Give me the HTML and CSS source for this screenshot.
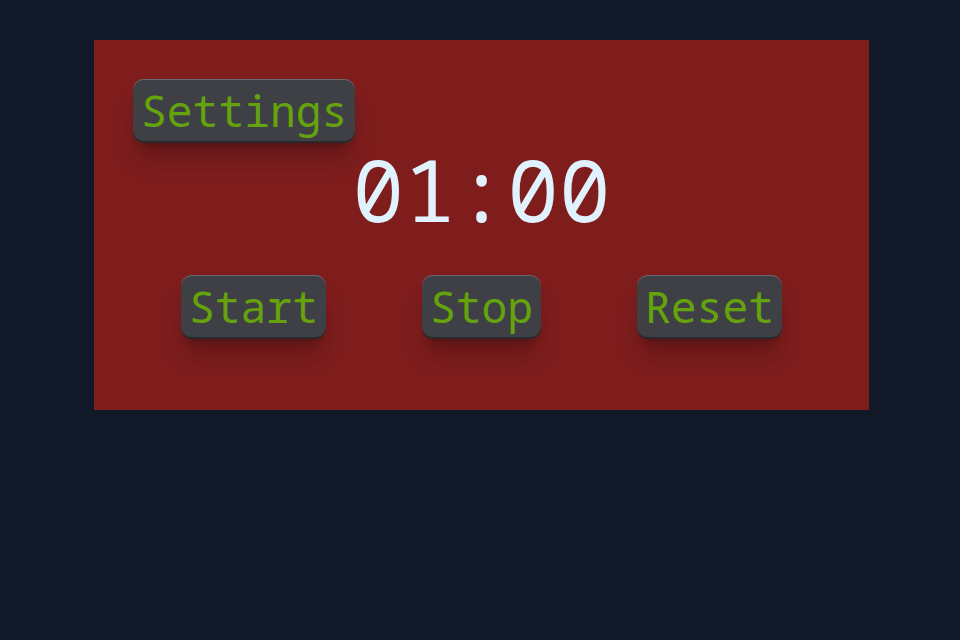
FILE: index.html
```html
<!DOCTYPE html>
<html>
<head>
<meta charset="utf-8">
<link rel="stylesheet" href="styles.css">
</head>
<body>
<main class="panel">
  <div class="top-row">
    <button class="btn">Settings</button>
  </div>
  <div class="timer">01:00</div>
  <div class="controls">
    <button class="btn">Start</button>
    <button class="btn">Stop</button>
    <button class="btn">Reset</button>
  </div>
</main>
</body>
</html>
```
FILE: styles.css
```css
html, body {
  margin: 0;
  padding: 0;
  background: #111827;
  height: 100%;
}
body {
  font-family: "Noto Sans Mono", "DejaVu Sans Mono", monospace;
  padding-top: 40px;
  box-sizing: border-box;
}
.panel {
  margin-left: 94px;
  width: 775px;
  height: 370px;
  box-sizing: border-box;
  background: #7f1d1d;
  padding: 39px 39px;
  display: flex;
  flex-direction: column;
}
.top-row {
  display: flex;
}
.btn {
  font-family: "Noto Sans Mono", "DejaVu Sans Mono", monospace;
  font-size: 43px;
  line-height: 50px;
  color: #65a30d;
  background: #3f3f46;
  border: none;
  border-radius: 11px;
  padding: 7px 8px;
  box-shadow: inset 0 1px 0 rgba(255,255,255,0.22),
              inset 0 -2px 0 rgba(0,0,0,0.35),
              0 20px 25px -5px rgba(0,0,0,0.22),
              0 8px 10px -6px rgba(0,0,0,0.22);
}
.timer {
  font-size: 86px;
  line-height: 92px;
  color: #e0f2fe;
  text-align: center;
}
.controls {
  margin-top: 40px;
  display: flex;
  justify-content: space-around;
}
```
